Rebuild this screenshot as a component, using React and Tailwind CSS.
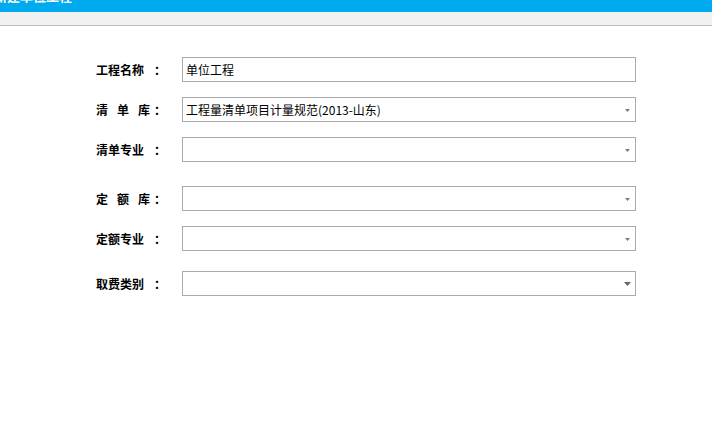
import React from "react";

function Arrow({ big }) {
  return big ? (
    <svg width="7" height="4" viewBox="0 0 7 4" className="absolute right-[4px] top-[10px]">
      <polygon points="0,0 7,0 3.5,4" fill="#666666" />
    </svg>
  ) : (
    <svg width="5" height="3" viewBox="0 0 5 3" className="absolute right-[5px] top-[11px]">
      <polygon points="0,0 5,0 2.5,3" fill="#7a7a85" />
    </svg>
  );
}

function Label({ chars, spaced }) {
  return (
    <div className="w-[86px] flex items-center text-[12px] font-bold text-black leading-none">
      <div className={`w-[58px] flex ${spaced ? "gap-[9px]" : ""}`}>
        {chars.map((c, i) => (
          <span key={i}>{c}</span>
        ))}
      </div>
      <span>：</span>
    </div>
  );
}

function Row({ chars, spaced, value, select, big, mt }) {
  return (
    <div className={`flex items-center ${mt || ""}`}>
      <Label chars={chars} spaced={spaced} />
      <div className="relative h-[25px] w-[454px] border border-[#ababab] bg-white flex items-center pl-[3px] text-[12px] text-black leading-none">
        {value}
        {select && <Arrow big={big} />}
      </div>
    </div>
  );
}

export default function App() {
  return (
    <div className="w-[712px] h-[434px] bg-white overflow-hidden" style={{ fontFamily: '"Noto Sans CJK SC",sans-serif' }}>
      <div className="h-[12px] bg-[#00aaef] overflow-hidden relative">
        <div className="absolute left-[-6px] top-[-11px] text-[13px] font-bold text-white leading-none whitespace-nowrap">新建单位工程</div>
      </div>
      <div className="h-[14px] bg-[#f1f1f1] border-b border-[#bdbdbd]" />
      <div className="pl-[96px] pt-[31px] flex flex-col">
        <Row chars={["工", "程", "名", "称"]} value="单位工程" />
        <Row mt="mt-[15px]" chars={["清", "单", "库"]} spaced value="工程量清单项目计量规范(2013-山东)" select />
        <Row mt="mt-[15px]" chars={["清", "单", "专", "业"]} select />
        <Row mt="mt-[24px]" chars={["定", "额", "库"]} spaced select />
        <Row mt="mt-[15px]" chars={["定", "额", "专", "业"]} select />
        <Row mt="mt-[20px]" chars={["取", "费", "类", "别"]} select big />
      </div>
    </div>
  );
}
